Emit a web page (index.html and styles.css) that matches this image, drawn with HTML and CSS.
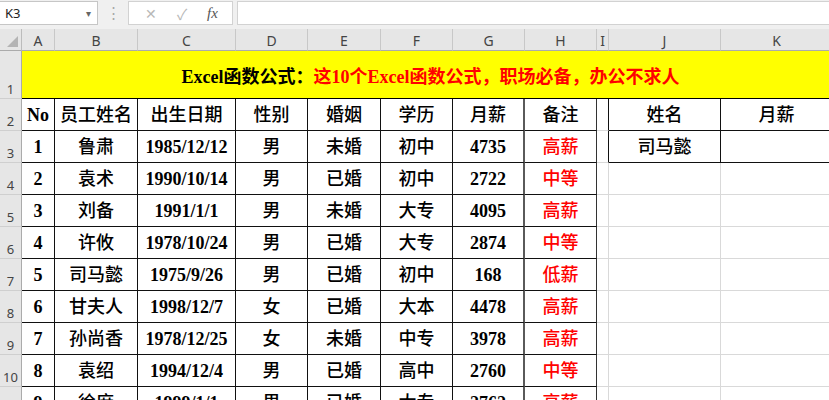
FILE: index.html
```html
<!DOCTYPE html>
<html lang="zh-CN">
<head>
  <meta charset="UTF-8" />
  <meta name="viewport" content="width=device-width, initial-scale=1.0" />
  <title>Excel函数公式</title>
  <link rel="stylesheet" href="styles.css">
</head>
<body>
  <div class="toolbar">
    <div class="namebox"><span>K3</span><span class="arrow">&#9662;</span></div>
    <div class="grip">&#8942;</div>
    <div class="fxbtns">
      <span class="cancel">&#10005;</span>
      <span class="enter">&#10003;</span>
      <span class="fx">fx</span>
    </div>
    <div class="formula"></div>
  </div>

  <div class="sheet">
    <!-- column headers -->
    <div class="corner"><span class="tri"></span></div>
    <div class="colhd">A</div>
    <div class="colhd">B</div>
    <div class="colhd">C</div>
    <div class="colhd">D</div>
    <div class="colhd">E</div>
    <div class="colhd">F</div>
    <div class="colhd">G</div>
    <div class="colhd">H</div>
    <div class="colhd">I</div>
    <div class="colhd">J</div>
    <div class="colhd">K</div>

    <!-- row 1 -->
    <div class="rowhd">1</div>
    <div class="title"><span class="dark">Excel函数公式：</span><span class="red">这10个Excel函数公式，职场必备，办公不求人</span></div>

    <!-- row 2 -->
    <div class="rowhd">2</div>
    <div class="c t n">No</div>
    <div class="c t zh">员工姓名</div>
    <div class="c t zh">出生日期</div>
    <div class="c t zh">性别</div>
    <div class="c t zh">婚姻</div>
    <div class="c t zh">学历</div>
    <div class="c t g zh">月薪</div>
    <div class="c t h zh">备注</div>
    <div class="c i"></div>
    <div class="c t zh">姓名</div>
    <div class="c t zh">月薪</div>

    <!-- row 3 -->
    <div class="rowhd">3</div>
    <div class="c t n">1</div>
    <div class="c t zh">鲁肃</div>
    <div class="c t n">1985/12/12</div>
    <div class="c t zh">男</div>
    <div class="c t zh">未婚</div>
    <div class="c t zh">初中</div>
    <div class="c t g n">4735</div>
    <div class="c t h zh red">高薪</div>
    <div class="c i"></div>
    <div class="c t zh">司马懿</div>
    <div class="c t"></div>

    <!-- row 4 -->
    <div class="rowhd">4</div>
    <div class="c t n">2</div>
    <div class="c t zh">袁术</div>
    <div class="c t n">1990/10/14</div>
    <div class="c t zh">男</div>
    <div class="c t zh">已婚</div>
    <div class="c t zh">初中</div>
    <div class="c t g n">2722</div>
    <div class="c t h zh red">中等</div>
    <div class="c"></div>
    <div class="c"></div>
    <div class="c"></div>

    <!-- row 5 -->
    <div class="rowhd">5</div>
    <div class="c t n">3</div>
    <div class="c t zh">刘备</div>
    <div class="c t n">1991/1/1</div>
    <div class="c t zh">男</div>
    <div class="c t zh">未婚</div>
    <div class="c t zh">大专</div>
    <div class="c t g n">4095</div>
    <div class="c t h zh red">高薪</div>
    <div class="c"></div>
    <div class="c"></div>
    <div class="c"></div>

    <!-- row 6 -->
    <div class="rowhd">6</div>
    <div class="c t n">4</div>
    <div class="c t zh">许攸</div>
    <div class="c t n">1978/10/24</div>
    <div class="c t zh">男</div>
    <div class="c t zh">已婚</div>
    <div class="c t zh">大专</div>
    <div class="c t g n">2874</div>
    <div class="c t h zh red">中等</div>
    <div class="c"></div>
    <div class="c"></div>
    <div class="c"></div>

    <!-- row 7 -->
    <div class="rowhd">7</div>
    <div class="c t n">5</div>
    <div class="c t zh">司马懿</div>
    <div class="c t n">1975/9/26</div>
    <div class="c t zh">男</div>
    <div class="c t zh">已婚</div>
    <div class="c t zh">初中</div>
    <div class="c t g n">168</div>
    <div class="c t h zh red">低薪</div>
    <div class="c"></div>
    <div class="c"></div>
    <div class="c"></div>

    <!-- row 8 -->
    <div class="rowhd">8</div>
    <div class="c t n">6</div>
    <div class="c t zh">甘夫人</div>
    <div class="c t n">1998/12/7</div>
    <div class="c t zh">女</div>
    <div class="c t zh">已婚</div>
    <div class="c t zh">大本</div>
    <div class="c t g n">4478</div>
    <div class="c t h zh red">高薪</div>
    <div class="c"></div>
    <div class="c"></div>
    <div class="c"></div>

    <!-- row 9 -->
    <div class="rowhd">9</div>
    <div class="c t n">7</div>
    <div class="c t zh">孙尚香</div>
    <div class="c t n">1978/12/25</div>
    <div class="c t zh">女</div>
    <div class="c t zh">未婚</div>
    <div class="c t zh">中专</div>
    <div class="c t g n">3978</div>
    <div class="c t h zh red">高薪</div>
    <div class="c"></div>
    <div class="c"></div>
    <div class="c"></div>

    <!-- row 10 -->
    <div class="rowhd">10</div>
    <div class="c t n">8</div>
    <div class="c t zh">袁绍</div>
    <div class="c t n">1994/12/4</div>
    <div class="c t zh">男</div>
    <div class="c t zh">已婚</div>
    <div class="c t zh">高中</div>
    <div class="c t g n">2760</div>
    <div class="c t h zh red">中等</div>
    <div class="c"></div>
    <div class="c"></div>
    <div class="c"></div>

    <!-- row 11 -->
    <div class="rowhd">11</div>
    <div class="c t n">9</div>
    <div class="c t zh">徐庶</div>
    <div class="c t n">1999/1/1</div>
    <div class="c t zh">男</div>
    <div class="c t zh">已婚</div>
    <div class="c t zh">大专</div>
    <div class="c t g n">2762</div>
    <div class="c t h zh red">高薪</div>
    <div class="c"></div>
    <div class="c"></div>
    <div class="c"></div>
  </div>
</body>
</html>
```

FILE: styles.css
```css
body { margin: 0; background: #f0f0f0; overflow: hidden; font-family: "Noto Sans", sans-serif; }

/* formula bar */
.toolbar { display: flex; align-items: stretch; height: 24px; padding-top: 1px; margin-bottom: 4px; }
.namebox { width: 98px; box-sizing: border-box; background: #fff; border: 1px solid #c6c6c6; border-left: none; display: flex; justify-content: space-between; align-items: center; padding: 0 6px 0 5px; font-size: 13px; color: #222; }
.namebox .arrow { font-size: 10px; color: #666; }
.grip { width: 30px; text-align: center; color: #a8a8a8; font-size: 15px; line-height: 23px; }
.fxbtns { width: 105px; box-sizing: border-box; background: #fff; border: 1px solid #d2d2d2; display: flex; align-items: center; justify-content: space-around; padding: 0 4px 0 6px; }
.cancel { color: #b8b8b8; font-size: 14px; }
.enter { color: #b8b8b8; font-size: 15px; }
.fx { font-family: "Liberation Serif", serif; font-style: italic; font-size: 15px; color: #555; }
.formula { flex: 1; margin-left: 4px; background: #fff; border: 1px solid #d2d2d2; border-right: none; }

/* grid */
.sheet { display: grid; grid-template-columns: 22px 33px 83px 98px 72px 73px 72px 72px 72px 12px 112px 112px; grid-template-rows: 22px 48px repeat(10, 32px); background: #fff; }
.sheet > div { box-sizing: border-box; }
.corner { background: #e6e6e6; border-right: 1px solid #bcbcbc; border-bottom: 1px solid #ababab; position: relative; }
.tri { position: absolute; right: 3px; bottom: 3px; width: 0; height: 0; border-left: 11px solid transparent; border-bottom: 11px solid #b4b4b4; }
.colhd { background: #e6e6e6; border-right: 1px solid #c8c8c8; border-bottom: 1px solid #ababab; display: flex; align-items: center; justify-content: center; font-size: 14px; color: #444; padding-top: 1px; }
.rowhd { background: #e6e6e6; border-right: 1px solid #ababab; border-bottom: 1px solid #cfcfcf; display: flex; align-items: flex-end; justify-content: center; font-size: 13px; color: #444; line-height: 16px; padding-bottom: 1px; }

.title { grid-column: 2 / -1; background: #ffff00; border-bottom: 1px solid #000; display: flex; align-items: center; justify-content: center; font-family: "Liberation Serif", "Noto Sans CJK SC", serif; font-weight: bold; font-size: 18px; padding-left: 6px; }
.dark { color: #000; }

.c { border-right: 1px solid #d9d9d9; border-bottom: 1px solid #d9d9d9; display: flex; align-items: center; justify-content: center; font-family: "Liberation Serif", "Noto Sans CJK SC", serif; font-size: 18px; line-height: 20px; color: #000; white-space: nowrap; }
.c.t { border-right-color: #111; border-bottom-color: #111; }
.c.g { border-right: 2px solid #5a5a5a; }
.c.h { border-right-color: #333; }
.c.i { border-right-color: #111; }
.n { font-weight: bold; }
.zh { font-weight: 500; }
.red { color: #f00; }
```
